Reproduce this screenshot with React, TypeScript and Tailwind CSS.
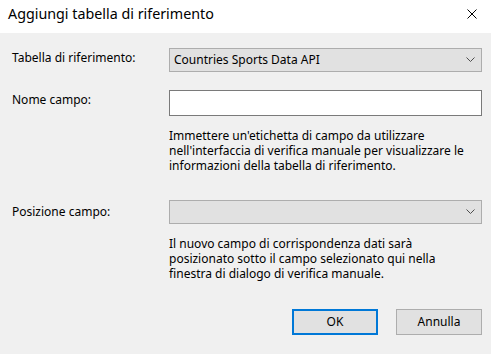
import React from "react";

function Chevron() {
  return (
    <svg width="10" height="6" viewBox="0 0 10 6" className="shrink-0">
      <polyline points="0.5,0.5 4.5,4.5 8.5,0.5" fill="none" stroke="#4d4d4d" strokeWidth="1" />
    </svg>
  );
}

function ComboBox({ value }: { value?: string }) {
  return (
    <div className="w-[313px] h-[24px] border border-[#adadad] bg-[#e1e1e1] flex items-center justify-between pl-[4px] pr-[5px]">
      <span className="leading-[16px]">{value}</span>
      <Chevron />
    </div>
  );
}

function Hint({ lines }: { lines: string[] }) {
  return (
    <div className="ml-[169px] mt-[12px] flex flex-col whitespace-nowrap">
      {lines.map((l) => (
        <div key={l} className="h-[15px] leading-[15px]">
          {l}
        </div>
      ))}
    </div>
  );
}

export default function App() {
  return (
    <div className="w-[491px] h-[354px] flex flex-col bg-[#f0f0f0] text-black text-[12px] font-['Noto_Sans',sans-serif]">
      {/* title bar */}
      <div className="h-[33px] shrink-0 bg-white flex items-start justify-between pl-2 pr-[14px]">
        <span className="text-[14.3px] leading-[20px] mt-[4px]">Aggiungi tabella di riferimento</span>
        <svg width="10" height="10" viewBox="0 0 10 10" className="mt-[9px]">
          <path d="M0.5 0.5 L9.5 9.5 M9.5 0.5 L0.5 9.5" stroke="#000" strokeWidth="1" />
        </svg>
      </div>

      <div className="flex flex-col">
        <div className="flex items-start mt-[15px]">
          <label className="w-[169px] pl-3 pt-[2px] leading-[16px]">Tabella di riferimento:</label>
          <ComboBox value="Countries Sports Data API" />
        </div>

        <div className="flex items-start mt-[18px]">
          <label className="w-[169px] pl-3 pt-[2px] leading-[16px]">Nome campo:</label>
          <div className="w-[313px] h-[26px] border border-[#7a7a7a] bg-white" />
        </div>

        <Hint
          lines={[
            "Immettere un'etichetta di campo da utilizzare",
            "nell'interfaccia di verifica manuale per visualizzare le",
            "informazioni della tabella di riferimento.",
          ]}
        />

        <div className="flex items-start mt-[27px]">
          <label className="w-[169px] pl-3 pt-[4px] leading-[16px]">Posizione campo:</label>
          <ComboBox />
        </div>

        <Hint
          lines={[
            "Il nuovo campo di corrispondenza dati sarà",
            "posizionato sotto il campo selezionato qui nella",
            "finestra di dialogo di verifica manuale.",
          ]}
        />

        <div className="flex justify-end gap-[18px] pr-[9px] mt-[28px]">
          <button className="w-[86px] h-[26px] border-2 border-[#0078d7] bg-[#e1e1e1] leading-[16px]">OK</button>
          <button className="w-[86px] h-[26px] border border-[#adadad] bg-[#e1e1e1] leading-[16px]">Annulla</button>
        </div>
      </div>
    </div>
  );
}
